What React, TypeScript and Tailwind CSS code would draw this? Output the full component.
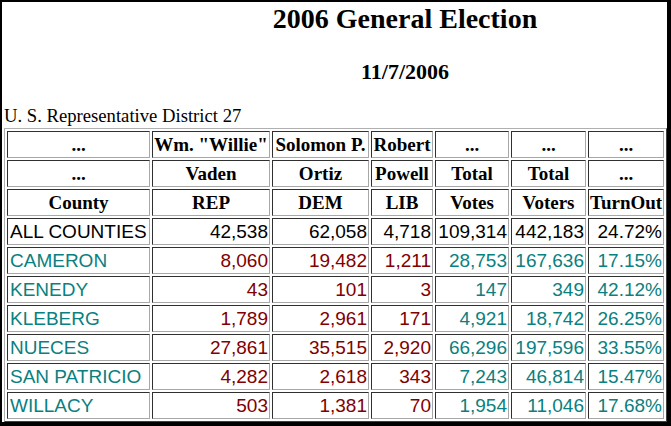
import React from 'react';

const serif = "font-['Liberation_Serif','Times_New_Roman',serif]";
const sans = "font-['Liberation_Sans',Arial,sans-serif]";

const widths = ['w-[143px]', 'w-[118px]', 'w-[97px]', 'w-[62px]', 'w-[74px]', 'w-[75px]', 'w-[76px]'];

const headRows = [
  ['...', 'Wm. "Willie"', 'Solomon P.', 'Robert', '...', '...', '...'],
  ['...', 'Vaden', 'Ortiz', 'Powell', 'Total', 'Total', '...'],
  ['County', 'REP', 'DEM', 'LIB', 'Votes', 'Voters', 'TurnOut'],
];

const rows = [
  ['ALL COUNTIES', '42,538', '62,058', '4,718', '109,314', '442,183', '24.72%'],
  ['CAMERON', '8,060', '19,482', '1,211', '28,753', '167,636', '17.15%'],
  ['KENEDY', '43', '101', '3', '147', '349', '42.12%'],
  ['KLEBERG', '1,789', '2,961', '171', '4,921', '18,742', '26.25%'],
  ['NUECES', '27,861', '35,515', '2,920', '66,296', '197,596', '33.55%'],
  ['SAN PATRICIO', '4,282', '2,618', '343', '7,243', '46,814', '15.47%'],
  ['WILLACY', '503', '1,381', '70', '1,954', '11,046', '17.68%'],
];

// cell = inset 1px border like an old border=1 table
const cell = 'h-[27px] p-0 px-[1px] border border-t-[#303030] border-l-[#303030] border-b-[#a8a8a8] border-r-[#a8a8a8] leading-[23px] whitespace-nowrap';

export default function App() {
  return (
    <div className="w-[671px] h-[426px] bg-white border-l-2 border-t-2 border-r-4 border-b-4 border-black overflow-hidden">
      {/* title */}
      <div className={`${serif} pl-[141px] text-center font-bold text-[28px] leading-[34px] text-black`}>
        2006 General Election
      </div>
      <div className={`${serif} pl-[141px] mt-[22px] text-center font-bold text-[22px] leading-[28px] text-black`}>
        11/7/2006
      </div>
      <div className={`${serif} pl-[2px] mt-[19px] text-[18.67px] leading-[22px] text-black`}>
        U. S. Representative District 27
      </div>

      {/* results table */}
      <div className="pl-[2px] mt-px">
        <table className="w-[663px] table-fixed border-separate border-spacing-[2px] border border-t-[#b0b0b0] border-l-[#b0b0b0] border-b-[#404040] border-r-[#404040]">
          <tbody>
            {headRows.map((r, i) => (
              <tr key={'h' + i}>
                {r.map((c, j) => (
                  <td
                    key={j}
                    className={`${cell} ${i === 0 ? widths[j] : ''} ${serif} text-[19px] font-bold text-center text-black`}
                  >
                    {c}
                  </td>
                ))}
              </tr>
            ))}
            {rows.map((r, i) => (
              <tr key={r[0]}>
                {r.map((c, j) => {
                  let color = 'text-[#0a8080]';
                  if (i === 0) color = 'text-black';
                  else if (j >= 1 && j <= 3) color = 'text-[#800000]';
                  return (
                    <td
                      key={j}
                      className={`${cell} ${sans} text-[19px] ${j === 0 ? 'text-left pl-[2px]' : 'text-right'} ${color}`}
                    >
                      {c}
                    </td>
                  );
                })}
              </tr>
            ))}
          </tbody>
        </table>
      </div>
    </div>
  );
}
